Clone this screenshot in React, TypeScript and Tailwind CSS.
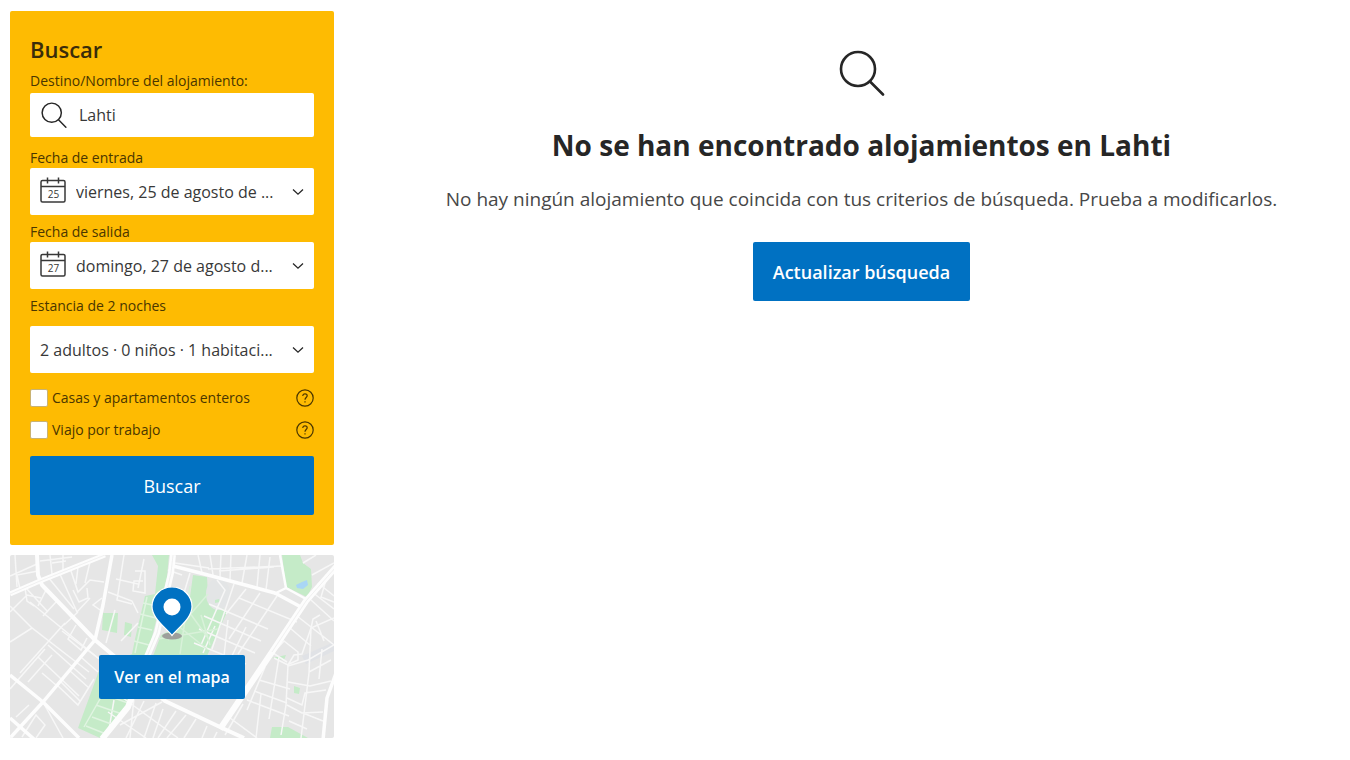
import { useState } from "react";

function SearchIcon({ className, strokeWidth }: { className?: string; strokeWidth: number }) {
  return (
    <svg viewBox="0 0 46 46" fill="none" stroke="currentColor" strokeWidth={strokeWidth} strokeLinecap="round" className={className} aria-hidden="true">
      <circle cx="19" cy="19" r="17" />
      <path d="M31 31.5 44 44.5" />
    </svg>
  );
}

function CalendarIcon({ day }: { day: string }) {
  return (
    <svg viewBox="0 0 26 26" fill="none" stroke="#383838" strokeWidth="1.5" className="mb-1 size-[26px] shrink-0" aria-hidden="true">
      <rect x="1" y="3.500" width="24" height="21.500" rx="1.5" />
      <path d="M1 9.500h24M7.5 0.5v6M18.5 0.5v6" />
      <text x="13.5" y="21" textAnchor="middle" fontSize="10" fill="#383838" stroke="none">
        {day}
      </text>
    </svg>
  );
}

function ChevronIcon() {
  return (
    <svg viewBox="0 0 12 8" fill="none" stroke="#262626" strokeWidth="1.3" className="h-2 w-3 shrink-0" aria-hidden="true">
      <path d="M1 1.5 6 6.200 11 1.5" />
    </svg>
  );
}

function HelpIcon() {
  return (
    <svg viewBox="0 0 18 18" fill="none" stroke="#4a3600" strokeWidth="1.2" className="size-[18px]" aria-hidden="true">
      <circle cx="9" cy="9" r="8.2" />
      <path d="M6.8 7.1C6.8 5.6 7.7 4.8 9 4.8s2.2.8 2.2 2c0 1.7-2.2 1.8-2.2 3.9" />
      <path d="M9 12.2v1.3" />
    </svg>
  );
}

function MapDrawing() {
  return (
    <svg viewBox="0 0 324 183" preserveAspectRatio="xMidYMid slice" className="absolute inset-0 size-full" aria-hidden="true">
      <rect width="324" height="183" fill="#e6e6e6" />

      {/* Parks and water */}
      <g fill="#c5ebc8">
        <path d="M142 0h17l-2 22-17 68-7 14-8 40-35 39-22-10 22-60 32-14 3-15 10-43 10-2 3-28z" />
        <path d="M93 58h15l-1 20-15-3zM115 67l7 2-1 13-7-2z" />
        <path d="M183 20l14 2 1 18 19 17-20 44h-54l8-21 20-10 9-28z" />
        <path d="M272 0h18l3 8 8 6 1 18-5 10-21-10z" />
        <path d="M262 103l14-3-2 5zM284 131l6 2-1 6-5-1zM262 172h16l20 11h-38z" />
      </g>
      <ellipse cx="208" cy="39" rx="12" ry="16" fill="#e3e5e6" />
      <path d="M205 45l4-1 1 3-5 1z" fill="#c5ebc8" />
      <path d="M286 30l6-3 5-2 1 5-5 4-6-1z" fill="#a9d6f5" />
      <path d="M292 101l32-14v9l-28 13z" fill="#e0e2e6" />

      {/* Side streets */}
      <g fill="none" stroke="#f7f7f7" strokeWidth="1.5">
        <path d="M5 0l2 32M0 21l27-12M10 34L7 20l21-4M40 0l2 19M30 6l32-4M53 0v15M42 8l14-2M15 33l2 13 7 5M0 57l17-17 14 3M16 33l22 24M20 47l68 56M36 35l-8 16M47 46l-14 15M38 22l26 32M49 17l18 40 13-14M60 13l8 24 12-12 14 2M68 12l-2 17M80 7l-5 21M63 35l6 12 9-4-1-10" />
        <path d="M0 87l22-14L79 117M22 73L0 51M10 118l45-50M28 102l41 39M38 90l38 34M52 76l40 30M66 70l-8 14 13 11 6-12M18 127l24-27M68 57l-14 13M0 134l35-40M48 131l20 19 16-26M46 130l-14-12M33 147l20 36M50 126l20 20M59 115l20 18M72 103l16 14M6 162l13-12M12 182l14-22 9 10-9 13" />
        <path d="M114 0l-7 45 15 4M106 24l22 5M134 4l-6 29M125 16h10v22l-12-2 1-10h9M98 37l24 9 6 12M93 57l-10-7 9-7M105 55l-9 33M111 86l17-18M158 15l14 5M180 18l-9 30" />
        <path d="M104 145l-6 35M113 143l55 40M124 143l-4 40M98 157l38 26M134 146l-18 37M110 170l42-23M146 148l-12 35M153 154l-10 29M166 156l-18 27M176 160l-19 23M186 164l-12 19M197 171l-5 12M207 177l-3 6" />
        <path d="M188 0l4 18M200 0l3 20M211 0l-1 22M221 0l-1 25M237 0l-5 28M250 0l-3 32M260 2l-4 33M165 8l34 5M198 14l74-3M209 16l55-4M207 25l8 10-24 55M199 49l59 25M194 61l57 25M189 74l56 24M184 88l52 21M224 29L202 94M236 34l-20 25M250 38l-31 46M267 41l-39 58M205 71l-12 27M218 65l-4 36M236 72l-18 37M229 43l58 24" />
        <path d="M255 112l-18 43M237 145l42 16M220 163l27 20M249 125l31 9M244 136l33 12M233 149l-18 31M264 103l14 7 6-10 8-1 9-26 2-9 7-4M251 139l-5 44M269 102l-10 62M277 107l-14-9 11-12 14 11v8l-11 5" />
        <path d="M301 45l23 21M287 61l37 29M280 73l21 18M308 28l16 13M302 37l22 17M316 25l-5 17 13 5M301 73l-2 45-8 65M301 73l23-10M278 110l-2 40-5 30M278 111l20-6 26-15M278 127l22 4 21-5M277 143l15 7 3-12 21-3M277 150l15 8 21-1M293 158l20 8M279 166l18 8M299 117l22-12M306 66l8 20M312 94l-3 30M293 8l13-8M302 20l22-12" />
        <path d="M169 43l29 40M198 39l-40 46M162 66l35 28M180 31l-10 68M148 84l60-10M191 60l9 30" stroke="#d8f1d9" />
        <path d="M133 48l14 3M130 59l16 4M128 72l14 3M124 86l15 4M95 125l29 9M90 138l28 10M86 150l26 9M82 162l22 8M76 171l20 8M137 42l-12 56M102 123l-28 49" stroke="#e0f4e1" />
      </g>

      {/* Main roads */}
      <g fill="none" stroke="#fdfdfd" strokeLinejoin="round">
        <path d="M0 39L30 26 95 0" strokeWidth="5" />
        <path d="M27 0l1 20 4 10 53 55 25 21 45 40 55 26 24 11" strokeWidth="4" />
        <path d="M102 0L93 50 85 85 33 147 0 183" strokeWidth="3.5" />
        <path d="M0 120l33 27 36 36M0 163l25 22" strokeWidth="3.5" />
        <path d="M163 0l-2 18-14 60-11 26-18 48-26 32" strokeWidth="6" />
        <path d="M163 11l35 9 67 18 26 14" strokeWidth="3.5" />
        <path d="M270 0l6 33-12 6M276 33l20 11" strokeWidth="2.5" />
        <path d="M326 12l-30 34-34 51-27 40-25 37" strokeWidth="6" />
        <path d="M326 118l-9 25-4 42" strokeWidth="3.5" />
      </g>
      <path d="M0 39L30 26 95 0M163 0l-2 18-14 60-11 26M326 12l-30 34-34 51" fill="none" stroke="#ececec" strokeWidth="0.8" />
    </svg>
  );
}

function PickerButton({ id, day, value }: { id: string; day?: string; value: string }) {
  return (
    <button
      id={id}
      type="button"
      className="flex h-[47px] w-full items-center gap-2.5 rounded-xs bg-white px-2.5 text-left text-base text-[#383838]"
    >
      {day && <CalendarIcon day={day} />}
      <span className="min-w-0 flex-1 truncate">{value}</span>
      <ChevronIcon />
    </button>
  );
}

function CheckRow({ id, label }: { id: string; label: string }) {
  return (
    <div className="flex h-5 items-center">
      <input
        id={id}
        type="checkbox"
        className="size-[18px] shrink-0 appearance-none rounded-xs border border-[#c9b272] bg-white checked:bg-[#0071c2]"
      />
      <label htmlFor={id} className="flex-1 pl-1 text-sm text-[#4a3600]">
        {label}
      </label>
      <button type="button" aria-label={`Más información: ${label}`}>
        <HelpIcon />
      </button>
    </div>
  );
}

function SearchForm() {
  const [destination, setDestination] = useState("Lahti");

  return (
    <form className="rounded-xs bg-[#febb02] px-5 pt-[22px] pb-[30px]" onSubmit={(e) => e.preventDefault()}>
      <h2 className="text-[22px] leading-8 font-semibold text-[#3a2c0a]">Buscar</h2>

      <label htmlFor="destination" className="mt-1.5 block text-sm text-[#4a3600]">
        Destino/Nombre del alojamiento:
      </label>
      <div className="mt-0.5 flex h-11 items-center gap-3 rounded-xs bg-white px-[11px]">
        <SearchIcon strokeWidth={2.6} className="size-[26px] shrink-0 text-[#262626]" />
        <input
          id="destination"
          type="text"
          value={destination}
          onChange={(e) => setDestination(e.target.value)}
          className="min-w-0 flex-1 bg-transparent text-base text-[#383838] outline-none"
        />
      </div>

      <label htmlFor="checkin" className="mt-[11px] block text-sm text-[#4a3600]">
        Fecha de entrada
      </label>
      <PickerButton id="checkin" day="25" value="viernes, 25 de agosto de ..." />

      <label htmlFor="checkout" className="mt-[7px] block text-sm text-[#4a3600]">
        Fecha de salida
      </label>
      <PickerButton id="checkout" day="27" value="domingo, 27 de agosto d..." />

      <p className="mt-[7px] mb-2.5 text-sm text-[#4a3600]">Estancia de 2 noches</p>
      <PickerButton id="guests" value="2 adultos · 0 niños · 1 habitaci..." />

      <div className="mt-[15px] mb-4 flex flex-col gap-3">
        <CheckRow id="entire-homes" label="Casas y apartamentos enteros" />
        <CheckRow id="work-trip" label="Viajo por trabajo" />
      </div>

      <button type="submit" className="h-[59px] w-full rounded-xs bg-[#0071c2] text-lg text-white">
        Buscar
      </button>
    </form>
  );
}

function MapCard() {
  return (
    <div className="relative flex h-[183px] flex-col items-center overflow-hidden rounded-xs pt-8">
      <MapDrawing />
      <svg viewBox="0 0 44 56" className="relative h-14 w-11" aria-hidden="true">
        <ellipse cx="22" cy="49" rx="10" ry="3.5" fill="#9d9f9b" />
        <path d="M22 48.5C15 40 2 31 2 19.500a20 19.500 0 0 1 40 0C42 31 29 40 22 48.500z" fill="#0071c2" stroke="#fff" strokeWidth="1.2" />
        <circle cx="22" cy="20" r="8.5" fill="#fff" />
      </svg>
      <button type="button" className="relative mt-3 h-11 rounded-xs bg-[#0071c2] px-[15px] text-base font-semibold text-white">
        Ver en el mapa
      </button>
    </div>
  );
}

export default function App() {
  return (
    <div className="flex gap-[39px] pt-[11px] pl-2.5 font-['Segoe_UI','Open_Sans','Noto_Sans',sans-serif]">
      <aside className="flex w-[324px] shrink-0 flex-col gap-2.5">
        <SearchForm />
        <MapCard />
      </aside>

      <main className="flex flex-1 flex-col items-center pt-[39px] text-center">
        <SearchIcon strokeWidth={2.6} className="size-[46px] text-[#262626]" />
        <h1 className="mt-[29px] text-[28px] leading-10 font-bold text-[#262626]">
          No se han encontrado alojamientos en Lahti
        </h1>
        <p className="mt-5 text-[19px] leading-7 text-[#474747]">
          No hay ningún alojamiento que coincida con tus criterios de búsqueda. Prueba a modificarlos.
        </p>
        <button type="button" className="mt-[29px] h-[59px] rounded-xs bg-[#0071c2] px-5 text-lg font-semibold text-white">
          Actualizar búsqueda
        </button>
      </main>
    </div>
  );
}
